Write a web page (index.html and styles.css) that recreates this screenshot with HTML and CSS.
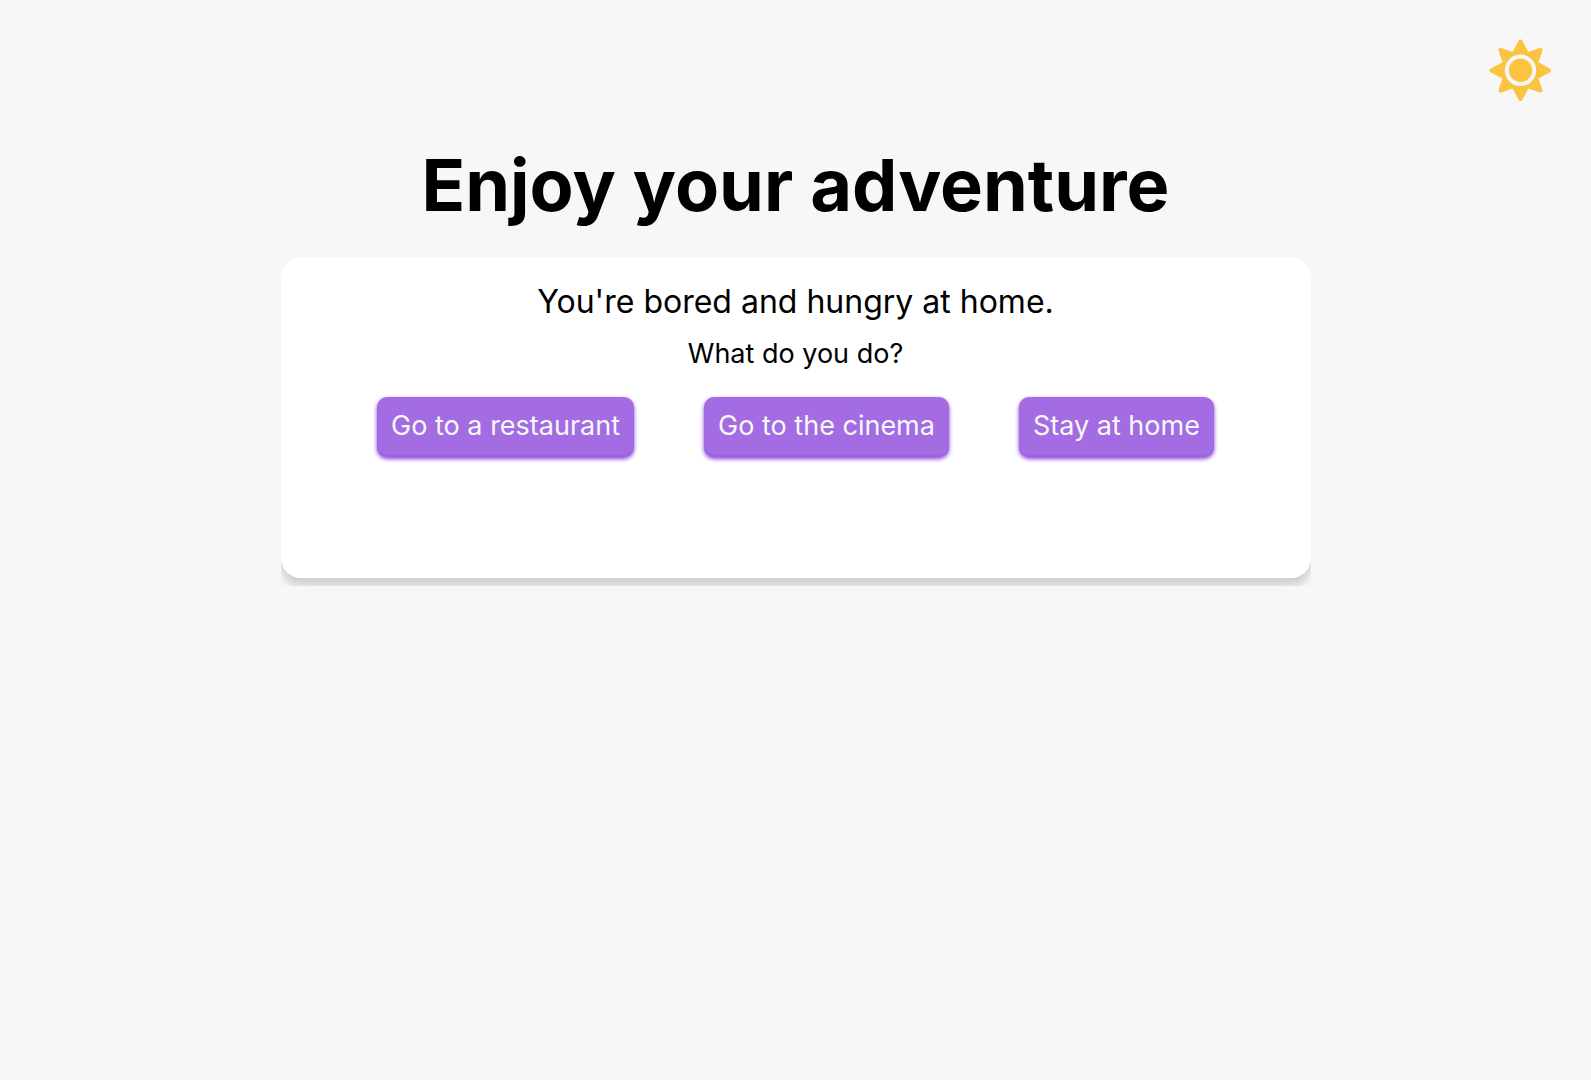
FILE: index.html
```html
<!DOCTYPE html>
<html lang="en">
<head>
    <meta charset="UTF-8">
    <meta name="viewport" content="width=device-width, initial-scale=1.0">
    <title>Enjoy your adventure</title>
    <link rel="stylesheet" href="styles.css">
</head>
<body>
    <header class="topbar">
        <button type="button" class="theme-btn" aria-label="Toggle theme">
            <svg class="sun" viewBox="0 0 62 62" aria-hidden="true">
                <path class="rays" d="M31.5 2.5 L38.5 15.5 L51.5 11 L47 24 L60 31.5 L47 38.5 L51.5 51.5 L38.5 47 L31.5 60 L24.5 47 L11.5 51.5 L16 38.5 L2.5 31.5 L16 24 L11.5 11 L24.5 15.5 Z"/>
                <circle class="ring" cx="31.5" cy="31.3" r="13.7"/>
            </svg>
        </button>
    </header>

    <main class="content">
        <h1 class="title">Enjoy your adventure</h1>
        <div class="card-wrap">
            <section class="card">
                <p class="story">You're bored and hungry at home.</p>
                <p class="question">What do you do?</p>
                <div class="choices">
                    <button type="button" class="choice">Go to a restaurant</button>
                    <button type="button" class="choice">Go to the cinema</button>
                    <button type="button" class="choice">Stay at home</button>
                </div>
            </section>
        </div>
    </main>
</body>
</html>
```
FILE: styles.css
```css
body {
    margin: 0;
    background-color: #f7f7f7;
    color: #000;
    font-family: Inter, sans-serif;
}
.topbar {
    display: flex;
    justify-content: flex-end;
    padding: 39px 40px 0;
}
.theme-btn {
    padding: 0;
    border: none;
    background: none;
    cursor: pointer;
}
.sun {
    display: block;
    width: 62px;
    height: 62px;
}
.rays {
    fill: #fac441;
    stroke: #fac441;
    stroke-width: 4;
    stroke-linejoin: round;
}
.ring {
    fill: none;
    stroke: #f7f7f7;
    stroke-width: 4;
}
.content {
    display: flex;
    flex-direction: column;
    align-items: center;
    padding: 40px 16px;
}
.title {
    margin: 0;
    font-size: 72px;
    line-height: 88px;
    font-weight: 700;
    text-align: center;
}
/* cuts the card shadow off at the sides */
.card-wrap {
    width: 100%;
    max-width: 1030px;
    margin-top: 28px;
    padding-bottom: 8px;
    overflow: hidden;
}
.card {
    box-sizing: border-box;
    min-height: 321px;
    padding: 23px 24px;
    border-radius: 20px;
    background-color: #fff;
    box-shadow: 0 8px 8px rgba(0, 0, 0, 0.16);
    text-align: center;
}
.story {
    margin: 0;
    font-size: 32px;
    line-height: 44px;
}
.question {
    margin: 11px 0 0;
    font-size: 27px;
    line-height: 38px;
}
.choices {
    display: flex;
    flex-wrap: wrap;
    justify-content: center;
    gap: 24px 70px;
    margin-top: 24px;
}
.choice {
    padding: 13px 14px 15px;
    border: none;
    border-radius: 10px;
    background-color: #a36ce2;
    box-shadow: 0 2px 4px #8b40dd, inset 0 -2px 1px #9d62e0;
    color: #f7f7f7;
    font-family: inherit;
    font-size: 27px;
    line-height: 32px;
    font-weight: 400;
    cursor: pointer;
}
```
